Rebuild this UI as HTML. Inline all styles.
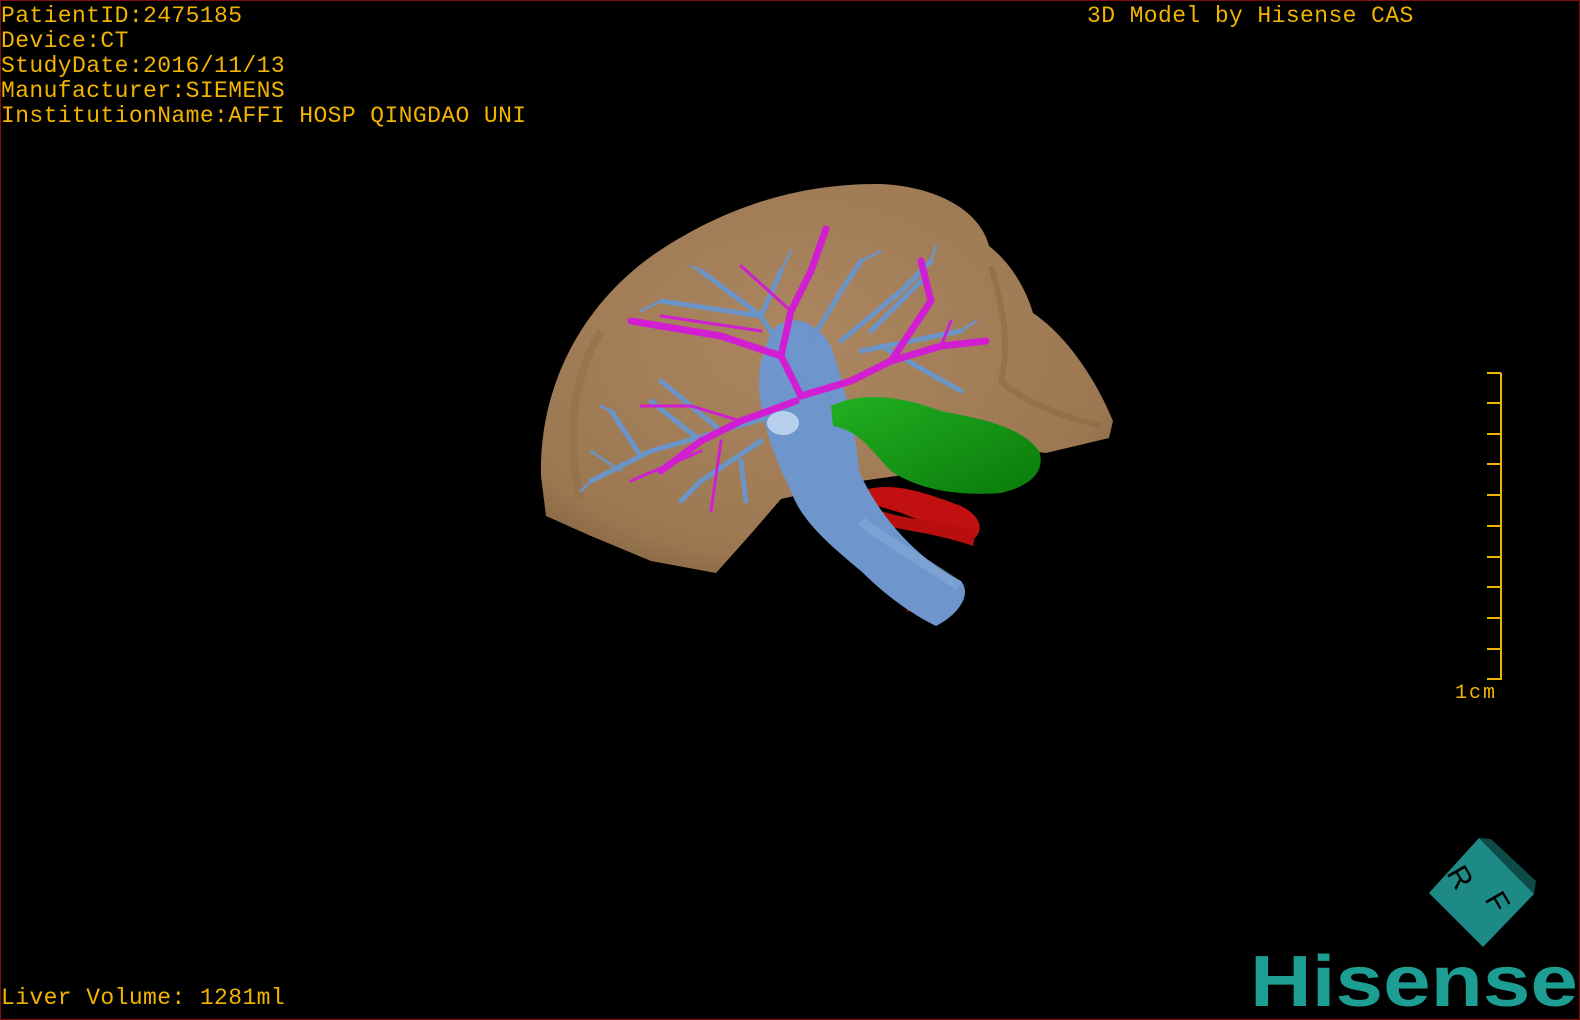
<!DOCTYPE html>
<html><head><meta charset="utf-8"><style>
html,body{margin:0;padding:0;background:#000;}
#c{position:relative;width:1580px;height:1020px;background:#000;overflow:hidden;box-sizing:border-box;border:1px solid #7a1010;}
.t{position:absolute;color:#f2b400;font-family:"Liberation Mono",monospace;font-size:23px;line-height:25px;white-space:pre;letter-spacing:0.4px;}
</style></head><body><div id="c">
<div class="t" style="left:0;top:3px">PatientID:2475185
Device:CT
StudyDate:2016/11/13
Manufacturer:SIEMENS
InstitutionName:AFFI HOSP QINGDAO UNI</div>
<div class="t" style="left:1086px;top:3px">3D Model by Hisense CAS</div>
<div class="t" style="left:0;top:985px">Liver Volume: 1281ml</div>
<div class="t" style="left:1454px;top:680px;font-size:20px;letter-spacing:2px">1cm</div>
<svg width="1580" height="1020" style="position:absolute;left:0;top:0">
<defs>
<radialGradient id="lv" cx="0.45" cy="0.4" r="0.7"><stop offset="0" stop-color="#ab8660"/><stop offset="0.8" stop-color="#9c7852"/><stop offset="1" stop-color="#7d5f3c"/></radialGradient>
<linearGradient id="gr" x1="0" y1="0" x2="1" y2="1"><stop offset="0" stop-color="#22b022"/><stop offset="1" stop-color="#0a7a0a"/></linearGradient>
</defs>
<path d="M540,475 C538,380 585,300 655,252 C725,205 800,182 880,183 C940,186 980,212 988,245 C1010,262 1025,288 1032,312 C1062,332 1092,372 1112,420 L1108,437 L1045,452 L990,445 L930,470 L860,480 L780,498 L748,535 L715,572 L650,560 L590,535 L545,515 Z" fill="url(#lv)"/>
<path d="M990,265 C1000,300 1010,340 1000,380 C1020,400 1060,415 1100,425" fill="none" stroke="#8a6a45" stroke-width="6" opacity="0.6"/>
<path d="M600,330 C570,380 565,440 580,500" fill="none" stroke="#8e6d47" stroke-width="8" opacity="0.5"/>
<!-- red vessels -->
<path d="M860,490 C890,480 920,490 960,505 C980,515 985,530 970,540 C950,530 920,520 900,512 C880,505 865,505 860,490 Z" fill="#c01010"/>
<path d="M880,510 C910,520 945,520 975,530 L972,545 C945,535 910,530 885,525 Z" fill="#b80e0e"/>
<path d="M900,560 C905,580 908,595 910,610" stroke="#b00" stroke-width="8" fill="none"/>
<!-- IVC -->
<path d="M770,330 C790,310 815,320 830,345 C845,390 855,430 858,470 C880,520 920,560 960,580 C972,595 955,615 935,625 C905,610 880,590 860,570 C830,545 800,520 790,490 C770,450 752,400 760,360 Z" fill="#6e95cc"/>
<path d="M860,520 C885,540 930,565 958,585" stroke="#86abd8" stroke-width="10" fill="none" opacity="0.6"/>
<!-- green -->
<path d="M830,405 C860,390 900,395 940,410 C980,418 1020,425 1038,450 C1045,470 1030,485 1000,492 C960,495 920,490 890,470 C870,450 860,430 832,425 Z" fill="url(#gr)"/>
<!-- blue branches -->
<g stroke="#6b94c8" stroke-width="5" fill="none" stroke-linecap="round">
<path d="M800,380 L760,315 L700,270 M760,315 L780,270 M760,315 L660,300 M810,340 L840,290 L860,260 M840,340 L900,290 L930,260 M860,350 L960,330 M870,330 L920,280 M790,410 L720,430 L650,450 L590,480 M720,430 L660,380 M700,440 L650,400 M760,440 L700,480 L680,500 M740,460 L745,500 M640,455 L610,410 M880,345 L960,390"/>
</g>
<g stroke="#6b94c8" stroke-width="2.5" fill="none" stroke-linecap="round">
<path d="M700,270 L690,265 M780,270 L790,250 M660,300 L640,310 M860,260 L880,250 M930,260 L935,245 M960,330 L975,320 M590,480 L580,490 M610,410 L600,405 M620,470 L590,450"/>
</g>
<!-- magenta -->
<g stroke="#d21ed2" stroke-width="7" fill="none" stroke-linecap="round">
<path d="M800,395 L780,355 L790,310 L810,270 L825,228 M780,355 L720,335 L630,320 M795,400 L740,420 L700,440 L660,470 M800,395 L850,380 L890,360 L940,345 L985,340 M890,360 L930,300 L920,260"/>
</g>
<g stroke="#d21ed2" stroke-width="3" fill="none" stroke-linecap="round">
<path d="M790,310 L740,265 M760,330 L660,315 M740,420 L690,405 L640,405 M720,440 L710,510 M700,450 L630,480 M940,345 L950,320"/>
</g>
<ellipse cx="782" cy="422" rx="16" ry="12" fill="#b8d0ee"/>
<!-- scale bar -->
<g stroke="#f2b400" stroke-width="2" fill="none">
<path d="M1500,372 L1500,679"/>
<path d="M1486,372 H1500 M1486,402 H1500 M1486,433 H1500 M1486,463 H1500 M1486,494 H1500 M1486,525 H1500 M1486,556 H1500 M1486,586 H1500 M1486,617 H1500 M1486,648 H1500 M1486,678 H1500"/>
</g>
<!-- cube -->
<polygon points="1478,837 1533,893 1482,946 1428,892" fill="#1e8a86"/>
<polygon points="1478,837 1490,838 1535,880 1533,893" fill="#0d4a48"/>
<text x="0" y="0" font-family="Liberation Sans,sans-serif" font-size="30" fill="#000" transform="translate(1445,872) rotate(60)">R</text>
<text x="0" y="0" font-family="Liberation Sans,sans-serif" font-size="30" fill="#000" transform="translate(1483,898) rotate(60)">F</text>
<text x="1249" y="1005" font-family="Liberation Sans,sans-serif" font-weight="bold" font-size="72" fill="#1d9e92" textLength="328" lengthAdjust="spacingAndGlyphs">Hisense</text>
</svg>
</div></body></html>
